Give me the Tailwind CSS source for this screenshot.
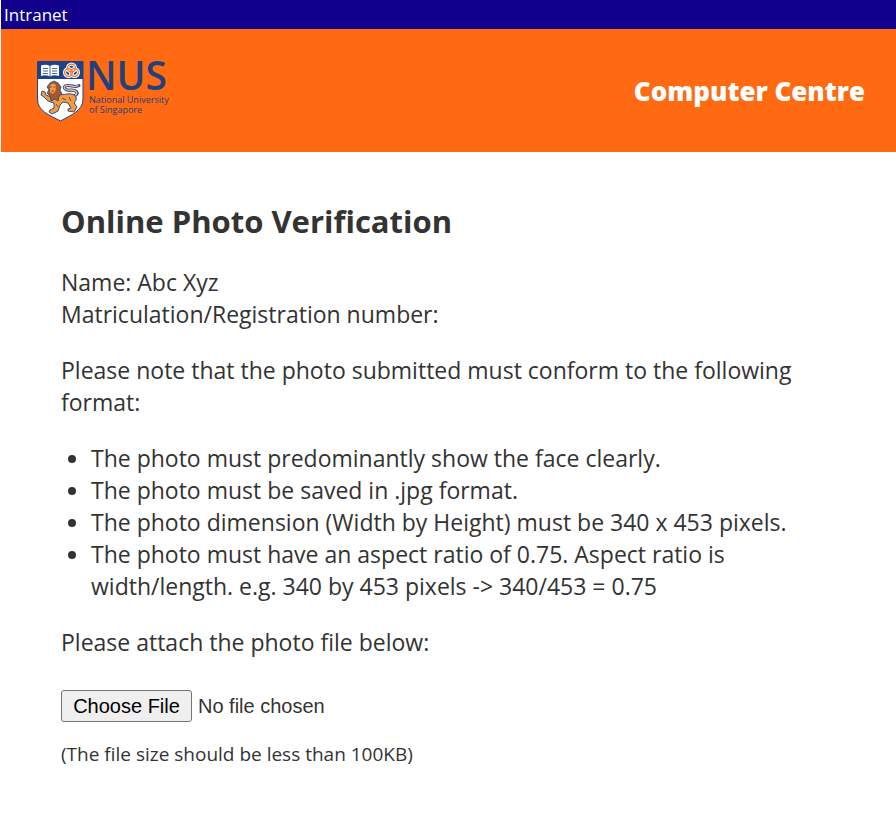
<!DOCTYPE html>
<html lang="en">
<head>
<meta charset="utf-8">
<meta name="viewport" content="width=device-width, initial-scale=1">
<title>Online Photo Verification</title>
<script src="https://cdn.jsdelivr.net/npm/@tailwindcss/browser@4"></script>
</head>
<body class="min-h-screen bg-white pl-px font-['Segoe_UI','Open_Sans','Noto_Sans',sans-serif] text-[#333]">
<nav class="flex h-[29px] items-center bg-[#10008c] pl-[3px] text-[17px] leading-6 text-white">
  <a href="#">Intranet</a>
</nav>
<header class="flex items-start justify-between bg-[#ff6a13] pt-8 pr-[31px] pb-[30px] pl-9">
  <svg class="h-[61px] w-[134px] overflow-visible" viewBox="0 0 134 61" role="img" aria-label="National University of Singapore">
    <path d="M.5.5H46V38C46 50 34 54 23.500 60C12 54 .5 50 .5 38Z" fill="#fff" stroke="#1d4289"/>
    <path d="M.5.5H46V18H.5Z" fill="#1d4289"/>
    <path d="M4 4.500Q9 3 13 5Q17 3 22 4.500V15Q17 13.500 13 15.500Q9 13.500 4 15Z" fill="#fff"/>
    <path d="M13 5V15.500M6 7.500H11M6 10H11M6 12.500H11M15 7.500H20M15 10H20M15 12.500H20" stroke="#1d4289" stroke-width=".8" fill="none"/>
    <g fill="none" stroke="#fff" stroke-width="3.200"><circle cx="34.500" cy="7" r="3.900"/><circle cx="31.500" cy="11.500" r="3.900"/><circle cx="37.500" cy="11.500" r="3.900"/></g>
    <g fill="none" stroke="#e8722a" stroke-width="1.200"><circle cx="34.500" cy="7" r="3.900"/><circle cx="31.500" cy="11.500" r="3.900"/><circle cx="37.500" cy="11.500" r="3.900"/></g>
    <path d="M37 35C43 33 40 29 34 29C27 30 25 25 30 24.500C35 24 38 27 42 24.500" fill="none" stroke="#1d4289" stroke-width="3" stroke-linecap="round"/>
    <path d="M37 35C42 33 40 29 34 29C27 30 25 25 30 24.500C35 24 38 27 41 24.500" fill="none" stroke="#ffc08a" stroke-width="1.300" stroke-linecap="round"/>
    <path d="M21 33C27 35 32 31 37 34C41 36 39 40 37 42L40 46L37 51L31 50V48L34 47L31 42L26 41L23 44L21 50L15 53L12 51L13 49L17 47V42L11 40L7 36L4 34L5 30L8 31L9 34L14 36Z" fill="#f79a3e" stroke="#1d4289" stroke-width=".9" stroke-linejoin="round"/>
    <path d="M13 22L17 20L21 22L24 26L23 29L25 33L22 35L21 40L18 38L14 40L13 35L10 32L12 29L10 26Z" fill="#a9552f" stroke="#1d4289" stroke-width=".8" stroke-linejoin="round"/>
    <path d="M13 24L16 22.500L19 24L18.500 30L16 33L13 31Z" fill="#f79a3e"/>
    <path d="M13 26H15M16.500 26H18.500M14.500 30H17M25 37L29 39M32 36L34 40M19 43L21 46" stroke="#1d4289" stroke-width=".8" fill="none"/>
    <g fill="#24407c" font-family="'Open Sans',sans-serif">
      <text x="49" y="29" font-size="39" font-weight="600">NUS</text>
      <text x="52" y="42" font-size="9" font-weight="400">National University<tspan x="52" y="52">of Singapore</tspan></text>
    </g>
  </svg>
  <p class="pt-3 text-[26px] leading-9 font-extrabold text-white">Computer Centre</p>
</header>
<main class="pt-12 pr-[60px] pb-12 pl-[60px] text-[23px] leading-8">
  <h1 class="text-[31px] leading-[42px] font-bold">Online Photo Verification</h1>
  <p class="mt-6">Name: Abc Xyz<br>Matriculation/Registration number:</p>
  <p class="mt-6">Please note that the photo submitted must conform to the following format:</p>
  <ul class="mt-6 list-disc pl-[30px]">
    <li>The photo must predominantly show the face clearly.</li>
    <li>The photo must be saved in .jpg format.</li>
    <li>The photo dimension (Width by Height) must be 340 x 453 pixels.</li>
    <li>The photo must have an aspect ratio of 0.75. Aspect ratio is width/length. e.g. 340 by 453 pixels -&gt; 340/453 = 0.75</li>
  </ul>
  <form>
    <label for="photo" class="mt-6 block">Please attach the photo file below:</label>
    <input id="photo" type="file" aria-describedby="size" class="mt-8 block h-8 w-full font-['Liberation_Sans',Arial,sans-serif] text-[20px] leading-7 file:mr-[6px] file:h-8 file:w-[131px] file:rounded-[3px] file:border file:border-solid file:border-[#767676] file:bg-[#efefef] file:p-0 file:text-black">
    <p id="size" class="mt-4 text-[19px] leading-8">(The file size should be less than 100KB)</p>
  </form>
</main>
</body>
</html>
